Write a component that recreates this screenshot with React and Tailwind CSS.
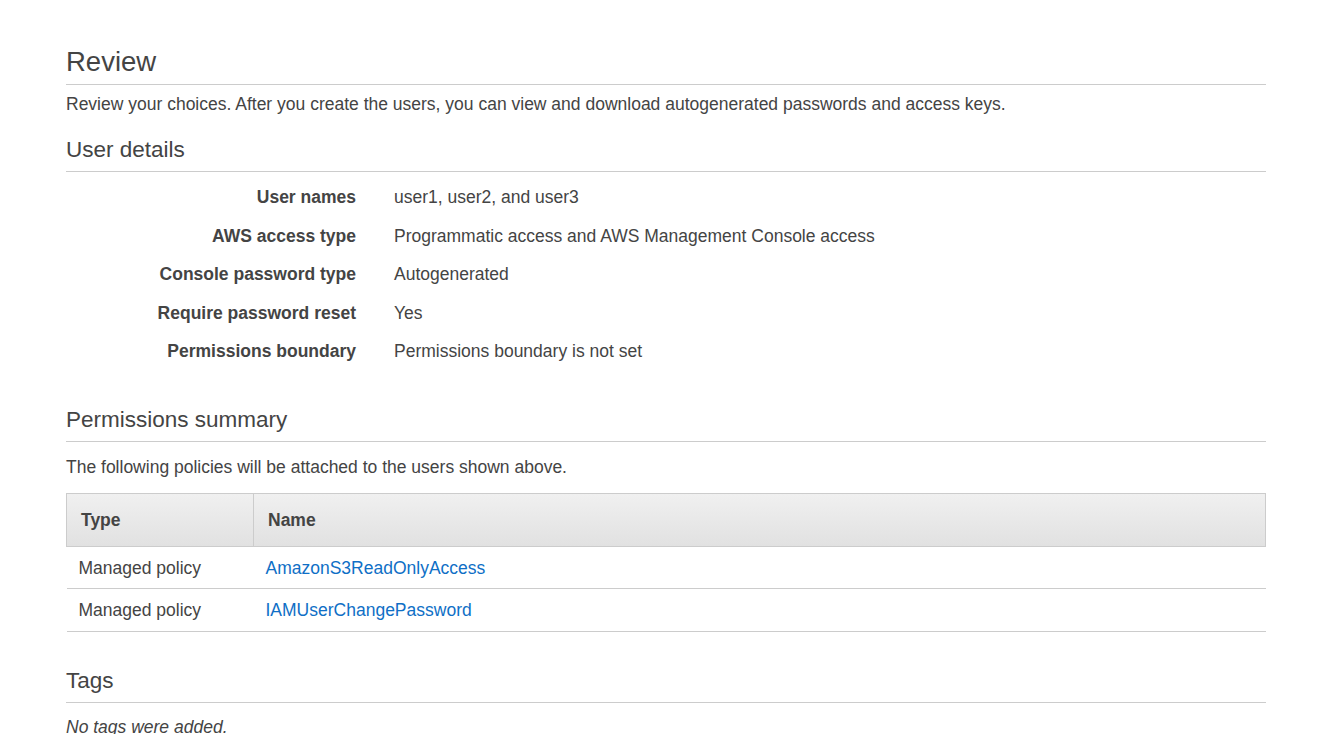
export default function App() {
  const details = [
    ["User names", "user1, user2, and user3"],
    ["AWS access type", "Programmatic access and AWS Management Console access"],
    ["Console password type", "Autogenerated"],
    ["Require password reset", "Yes"],
    ["Permissions boundary", "Permissions boundary is not set"],
  ];

  const policies = [
    ["Managed policy", "AmazonS3ReadOnlyAccess"],
    ["Managed policy", "IAMUserChangePassword"],
  ];

  return (
    <div className="min-h-screen bg-white text-[#444] font-['Liberation_Sans',Arial,sans-serif] text-[17.5px] leading-[24px]">
      <div className="ml-[66px] w-[1200px] pt-[45px]">
        <h1 className="text-[27.5px] leading-[33px] pb-[6px] border-b border-[#cccccc]">Review</h1>
        <p className="mt-[7px]">
          Review your choices. After you create the users, you can view and download autogenerated passwords and access keys.
        </p>

        <h2 className="mt-[20px] text-[22.5px] leading-[28px] pb-[7px] border-b border-[#cccccc]">User details</h2>
        <div className="mt-[13px] grid grid-cols-[290px_1fr] gap-x-[38px] gap-y-[14.5px]">
          {details.map(([label, value]) => (
            <div key={label} className="contents">
              <div className="text-right font-bold">{label}</div>
              <div>{value}</div>
            </div>
          ))}
        </div>

        <h2 className="mt-[43px] text-[22.5px] leading-[28px] pb-[7px] border-b border-[#cccccc]">Permissions summary</h2>
        <p className="mt-[13px]">The following policies will be attached to the users shown above.</p>

        <table className="mt-[14px] w-full table-fixed border-collapse">
          <colgroup>
            <col className="w-[187px]" />
            <col />
          </colgroup>
          <thead>
            <tr className="bg-linear-to-b from-[#f0f0f0] to-[#e1e1e1]">
              <th className="border border-[#cccccc] text-left font-bold pt-[14px] pb-[14px] pl-[14px]">Type</th>
              <th className="border border-[#cccccc] text-left font-bold pt-[14px] pb-[14px] pl-[14px]">Name</th>
            </tr>
          </thead>
          <tbody>
            {policies.map(([type, name]) => (
              <tr key={name} className="border-b border-[#cccccc]">
                <td className="pt-[8.5px] pb-[8.75px] pl-[12px]">{type}</td>
                <td className="pt-[8.5px] pb-[8.75px] pl-[12px]">
                  <a href="#" className="text-[#0f6fc6]">{name}</a>
                </td>
              </tr>
            ))}
          </tbody>
        </table>

        <h2 className="mt-[35px] text-[22.5px] leading-[28px] pb-[7px] border-b border-[#cccccc]">Tags</h2>
        <p className="mt-[12px] italic">No tags were added.</p>
      </div>
    </div>
  );
}
